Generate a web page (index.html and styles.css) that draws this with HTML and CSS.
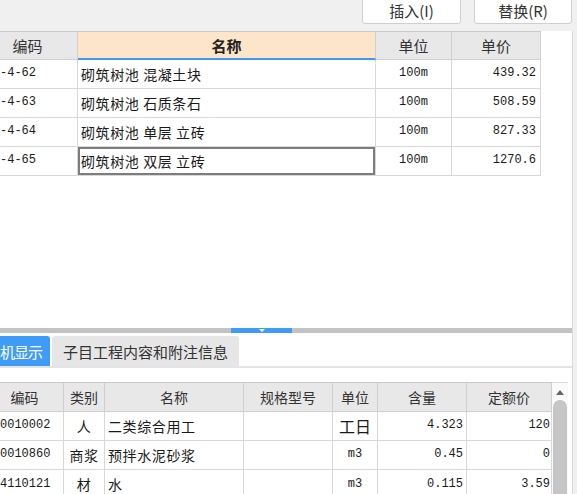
FILE: index.html
```html
<!DOCTYPE html>
<html lang="zh-CN">
<head>
<meta charset="utf-8">
<link rel="stylesheet" href="styles.css">
</head>
<body>
<div class="toolbar">
  <button class="btn btn-insert">插入(I)</button>
  <button class="btn btn-replace">替换(R)</button>
</div>
<div class="main">
  <div class="top-pane">
    <div class="grid grid-top">
      <div class="hc">编码</div>
      <div class="hc hc-sel">名称</div>
      <div class="hc">单位</div>
      <div class="hc">单价</div>

      <div class="c mono code">-4-62</div>
      <div class="c name">砌筑树池 混凝土块</div>
      <div class="c mono unit">100m</div>
      <div class="c mono num">439.32</div>

      <div class="c mono code">-4-63</div>
      <div class="c name">砌筑树池 石质条石</div>
      <div class="c mono unit">100m</div>
      <div class="c mono num">508.59</div>

      <div class="c mono code">-4-64</div>
      <div class="c name">砌筑树池 单层 立砖</div>
      <div class="c mono unit">100m</div>
      <div class="c mono num">827.33</div>

      <div class="c mono code">-4-65</div>
      <div class="c name focus">砌筑树池 双层 立砖</div>
      <div class="c mono unit">100m</div>
      <div class="c mono num">1270.6</div>
    </div>
  </div>
  <div class="splitter"><div class="grip"></div></div>
  <div class="tabbar">
    <div class="tab active">机显示</div>
    <div class="tab">子目工程内容和附注信息</div>
  </div>
  <div class="bottom-pane">
    <div class="grid grid-bottom">
      <div class="hb">编码</div>
      <div class="hb">类别</div>
      <div class="hb">名称</div>
      <div class="hb">规格型号</div>
      <div class="hb">单位</div>
      <div class="hb">含量</div>
      <div class="hb">定额价</div>

      <div class="c mono bcode">0010002</div>
      <div class="c cat">人</div>
      <div class="c name">二类综合用工</div>
      <div class="c"></div>
      <div class="c unit big">工日</div>
      <div class="c mono num qty">4.323</div>
      <div class="c mono num price">120</div>

      <div class="c mono bcode">0010860</div>
      <div class="c cat">商浆</div>
      <div class="c name">预拌水泥砂浆</div>
      <div class="c"></div>
      <div class="c mono unit">m3</div>
      <div class="c mono num qty">0.45</div>
      <div class="c mono num price">0</div>

      <div class="c last mono bcode">4110121</div>
      <div class="c last cat">材</div>
      <div class="c last name">水</div>
      <div class="c last"></div>
      <div class="c last mono unit">m3</div>
      <div class="c last mono num qty">0.115</div>
      <div class="c last mono num price">3.59</div>
    </div>
    <div class="vscroll">
      <div class="arrow"></div>
      <div class="thumb"></div>
    </div>
  </div>
</div>
</body>
</html>
```

FILE: styles.css
```css
body {
  margin: 0;
  width: 577px;
  height: 494px;
  overflow: hidden;
  background: #f0f0f0;
  font-family: "Noto Sans CJK SC", "Noto Sans", sans-serif;
  color: #333;
}

.toolbar {
  height: 31px;
  box-sizing: border-box;
  display: flex;
  justify-content: flex-end;
  align-items: flex-start;
  gap: 13px;
  padding-right: 5px;
}

.btn {
  margin-top: -6px;
  height: 30px;
  box-sizing: border-box;
  border: 1px solid #cfcfcf;
  border-radius: 3px;
  background: #fff;
  font-family: "Noto Sans CJK SC", sans-serif;
  font-size: 15px;
  color: #333;
  padding: 2px 0 0;
  display: flex;
  align-items: center;
  justify-content: center;
}
.btn-insert { width: 99px; }
.btn-replace { width: 98px; }

.main {
  width: 573px;
  height: 463px;
  box-sizing: border-box;
  border-right: 1px solid #dadada;
  background: #fff;
  overflow: hidden;
}

.top-pane {
  height: 297px;
  overflow: hidden;
}

.grid {
  display: grid;
  width: max-content;
  border-top: 1px solid #cacaca;
}

.grid-top {
  grid-template-columns: 100px 298px 76px 89px;
  margin-left: -22px;
}

.hc, .hb {
  box-sizing: border-box;
  background: #e8e8e8;
  border-right: 1px solid #d0d0d0;
  border-bottom: 1px solid #d0d0d0;
  display: flex;
  align-items: center;
  justify-content: center;
  color: #333;
  white-space: nowrap;
}
.hc { height: 28px; font-size: 15px; }
.hb { height: 29px; font-size: 14px; }

.hc-sel {
  background: #fde5c9;
  border-bottom: 2px solid #3d9bf6;
  font-weight: bold;
  color: #222;
}

.c {
  height: 29px;
  box-sizing: border-box;
  border-right: 1px solid #d8d8d8;
  border-bottom: 1px solid #d8d8d8;
  display: flex;
  align-items: center;
  font-size: 14px;
  line-height: 1.15;
  color: #1a1a1a;
  white-space: nowrap;
  overflow: hidden;
}

.c.last {
  height: 25px;
  border-bottom: 0;
  padding-top: 4px;
}

.mono {
  font-family: "Liberation Mono", "DejaVu Sans Mono", monospace;
  font-size: 12px;
}

.code { padding-left: 22px; }
.bcode { padding-left: 14px; }
.name { padding-left: 3px; letter-spacing: 0.6px; }
.unit { justify-content: center; }
.cat { justify-content: center; letter-spacing: 0.5px; }
.big { font-size: 16px; }
.num { justify-content: flex-end; padding-right: 4px; }
.qty { padding-right: 3px; }
.price { padding-right: 1px; }

.focus {
  box-shadow: inset 0 0 0 2px #7d7d7d;
}

.splitter {
  height: 5px;
  background: #c3c3c3;
  display: flex;
}
.grip {
  margin-left: 231px;
  width: 61px;
  background: #3f9cf6;
  display: flex;
  justify-content: center;
}
.grip::after {
  content: "";
  width: 0;
  height: 0;
  margin-top: 1px;
  border-left: 3px solid transparent;
  border-right: 3px solid transparent;
  border-top: 3px solid #fff;
}

.tabbar {
  margin-top: 3px;
  display: flex;
  gap: 2px;
  border-bottom: 2px solid #e4e4e4;
}
.tab {
  height: 30px;
  box-sizing: border-box;
  padding: 0 11px;
  display: flex;
  align-items: center;
  font-size: 15px;
  background: #e6e6e6;
  color: #333;
  border-radius: 3px 3px 0 0;
  white-space: nowrap;
}
.tab.active {
  width: 50px;
  background: #3f9cf6;
  color: #fff;
  padding: 0;
  border-radius: 0 3px 0 0;
  letter-spacing: -1px;
}

.bottom-pane {
  margin-top: 14px;
  display: flex;
}

.grid-bottom {
  grid-template-columns: 78px 41px 139px 89px 45px 89px 85px;
  margin-left: -14px;
}

.vscroll {
  width: 16px;
  height: 112px;
  box-sizing: border-box;
  border-top: 1px solid #e0e0e0;
  background: #fafafa;
  display: flex;
  flex-direction: column;
  align-items: center;
}
.arrow {
  margin-top: 7px;
  width: 0;
  height: 0;
  border-left: 4px solid transparent;
  border-right: 4px solid transparent;
  border-bottom: 5px solid #666;
}
.thumb {
  margin-top: 5px;
  width: 14px;
  flex: 1;
  background: #c6c6c6;
  border-radius: 7px 7px 0 0;
}
```
